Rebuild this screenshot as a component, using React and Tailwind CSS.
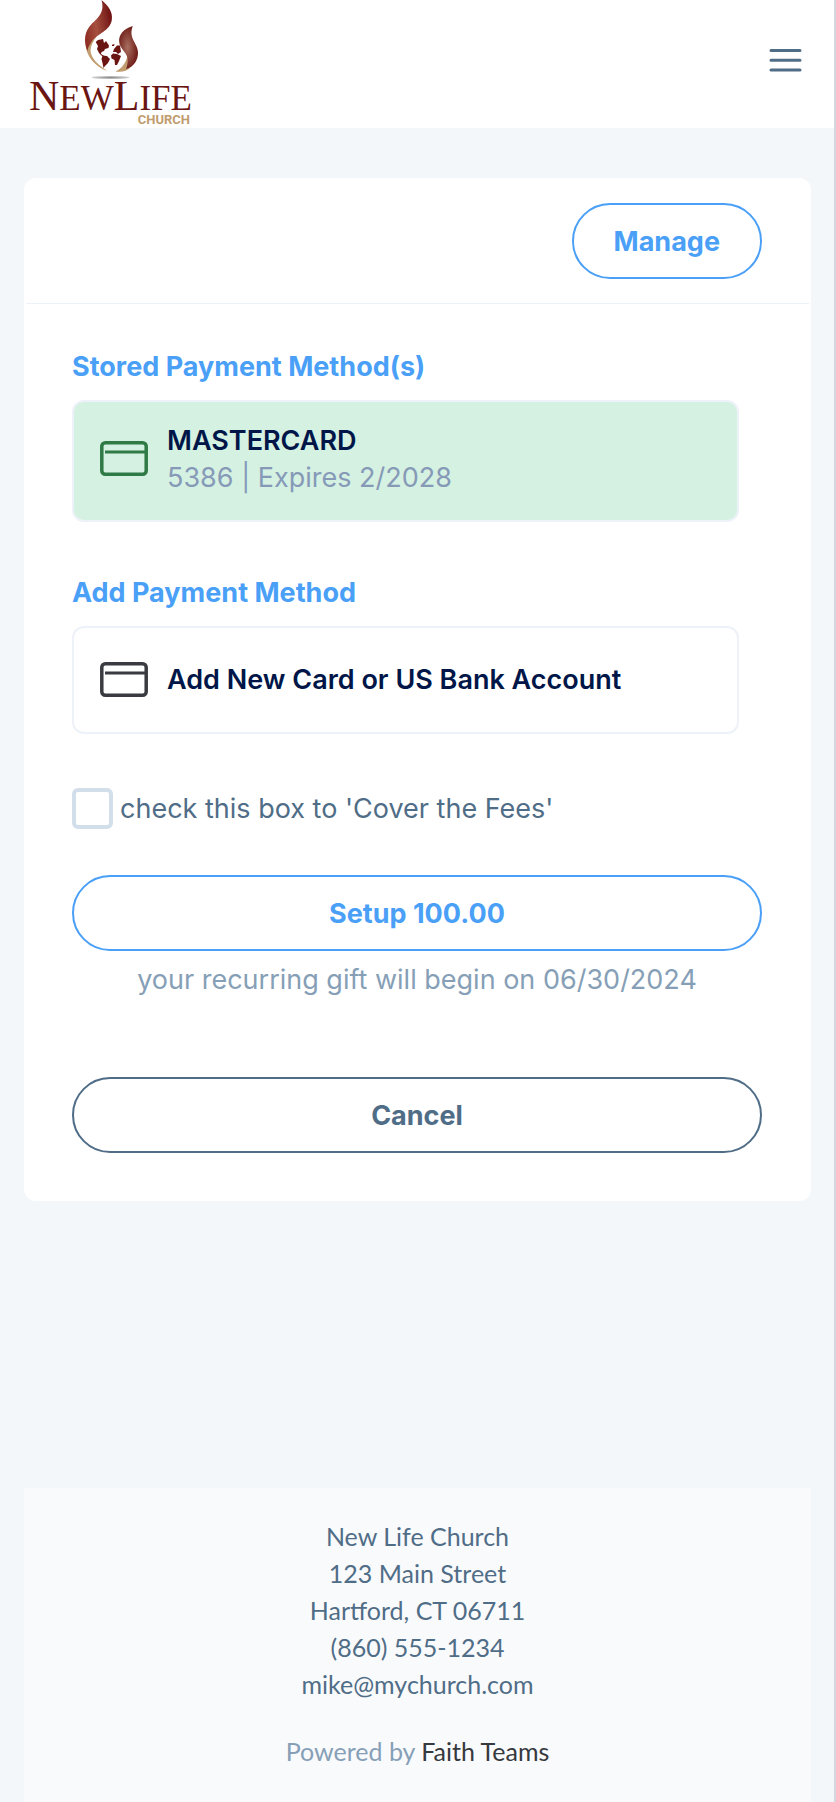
import React, { useState } from 'react';

const Logo = () => (
  <svg viewBox="24 0 172 128" className="h-32 w-[172px]" role="img" aria-label="New Life Church">
    <defs>
      <linearGradient id="flameLeft" x1="0" y1="0.6" x2="1" y2="0.3">
        <stop offset="0" stopColor="#8f2f25" />
        <stop offset="0.4" stopColor="#a5503f" />
        <stop offset="1" stopColor="#6d0f10" />
      </linearGradient>
      <radialGradient id="flameRight" cx="0.45" cy="0.5" r="0.5">
        <stop offset="0" stopColor="#a86f60" />
        <stop offset="1" stopColor="#71201b" />
      </radialGradient>
      <radialGradient id="shadow">
        <stop offset="0" stopColor="#8a8a8a" />
        <stop offset="1" stopColor="#d5d5d5" />
      </radialGradient>
    </defs>
    <path fill="#c09c6e" d="M97 36 C90 37 86 40 85.5 44 C86 56 95 67 107.5 71 C98 65 91 58 90.5 51 C90.5 46 93 41 97 36Z" />
    <path fill="url(#flameLeft)" d="M101.5 0 C108.5 6 113 12 111.8 20 C110 31 97 34 92 41 C89.5 45 88 47 87.5 51 C83 41 84.5 31 92 23.5 C98 18 105 12 101.5 0Z" />
    <path fill="#c09c6e" d="M128.5 52 C127 61 123 68 115.5 71.5 C122 72.5 127 71 130 68 C131 62 130 57 128.5 52Z" />
    <path fill="url(#flameRight)" d="M132.8 26 C123 29 118.5 35 119.2 42 C119.5 49 128.5 53 127.7 61 C127.5 64 127 67 126 69 C134 67 138.3 60 138 52 C137.5 43 128 38 132.8 26Z" />
    {/* continents */}
    <g fill="#6b1513">
      <path d="M95.7 42 L98 40 L103 39 L104 43 L106 41 L109 45.5 L108.5 48 L105 49 L104 51 L101.5 52 L101 54 L104 56 L102 56 L99 53 L97 49 L98 46Z" />
      <path d="M102.5 55.5 L107 56 L110 59 L108 63 L105 66 L103.5 68 L102.5 63 L101.5 59Z" />
      <path d="M113 53.5 L117 54 L121 56 L119 61 L117 65 L115 65 L114.5 60 L111.5 58.5 L111 55.5Z" />
      <path d="M113 52 L114 49 L117 45.5 L120 45.5 L121 52 L118 54 L116 52Z" />
      <path d="M112 44.8 L114.5 44 L114 46 L112 46Z" />
    </g>
    <ellipse cx="110.5" cy="77.5" rx="19" ry="1.6" fill="url(#shadow)" />
    <text x="29" y="110" fill="#6b1513" fontFamily="'Liberation Serif', serif" fontSize="35">
      <tspan fontSize="42">N</tspan>EW<tspan fontSize="42">L</tspan>IFE
    </text>
    <text x="190" y="124" textAnchor="end" fill="#c09c6e" fontFamily="Roboto, sans-serif" fontWeight="700" fontSize="13">
      CHURCH
    </text>
  </svg>
);

const CardIcon = ({ className }) => (
  <svg viewBox="0 0 48 36" className={`h-9 w-12 shrink-0 ${className}`} fill="none" stroke="currentColor" aria-hidden="true">
    <rect x="1.8" y="1.8" width="44.4" height="31.4" rx="3.5" strokeWidth="3.5" />
    <path d="M5 11 H46" strokeWidth="3" />
  </svg>
);

const App = () => {
  const [coverFees, setCoverFees] = useState(false);

  return (
    <div className="flex min-h-screen flex-col border-r-2 border-[#d3d7de] bg-[#f3f7fa] font-['Inter',sans-serif] text-[27px] leading-[37px] text-[#506d87]">
      <header className="flex h-32 items-center justify-between bg-white pr-8 pl-6">
        <Logo />
        <button type="button" aria-label="Open menu" className="mb-2">
          <svg viewBox="0 0 33 24" className="h-6 w-[33px]" stroke="currentColor" strokeWidth="3" strokeLinecap="round">
            <path d="M2 2.5 H31 M2 12.2 H31 M2 22 H31" />
          </svg>
        </button>
      </header>

      <main className="mr-[23px] ml-6 mt-[50px] mb-12 rounded-xl bg-white">
        <div className="mx-0.5 flex justify-end border-b border-[#edf2f8] pt-[25px] pr-[47px] pb-6">
          <button type="button" className="h-[76px] rounded-full border-2 border-[#4a9ff7] px-10 font-bold text-[#4a9ff7]">
            Manage
          </button>
        </div>

        <div className="pt-11 pr-[49px] pb-12 pl-12">
          <h2 className="font-bold text-[#4a9ff7]">Stored Payment Method(s)</h2>
          <div className="mt-[15px] mr-[23px]">
            <button type="button" className="flex w-full items-center gap-[19px] rounded-xl border-2 border-[#edf2f8] bg-[#d5f1e2] px-[26px] pt-5 pb-6 text-left">
              <CardIcon className="text-[#2f7a45]" />
              <span className="flex flex-col">
                <span className="font-semibold text-[#001648]">MASTERCARD</span>
                <span className="text-[#869ab8]">5386 | Expires 2/2028</span>
              </span>
            </button>
          </div>

          <h2 className="mt-[52px] font-bold text-[#4a9ff7]">Add Payment Method</h2>
          <div className="mt-[15px] mr-[23px]">
            <button type="button" className="flex w-full items-center gap-[19px] rounded-xl border-2 border-[#edf2f8] px-[26px] pt-[33px] pb-[34px] text-left">
              <CardIcon className="text-[#393b40]" />
              <span className="font-semibold text-[#001648]">Add New Card or US Bank Account</span>
            </button>
          </div>

          <div className="mt-[54px] flex items-center gap-[7px]">
            <input
              id="cover-fees"
              type="checkbox"
              checked={coverFees}
              onChange={(e) => setCoverFees(e.target.checked)}
              className="size-[41px] shrink-0 appearance-none rounded-md border-4 border-[#d2dfea] bg-white checked:bg-[#4a9ff7]"
            />
            <label htmlFor="cover-fees">check this box to 'Cover the Fees'</label>
          </div>

          <button type="button" className="mt-[46px] h-[76px] w-full rounded-full border-2 border-[#4a9ff7] font-bold text-[#4a9ff7]">
            Setup 100.00
          </button>
          <p className="mt-[10px] text-center text-[#869fb7]">your recurring gift will begin on 06/30/2024</p>

          <button type="button" className="mt-[79px] h-[76px] w-full rounded-full border-2 border-[#506d87] font-bold">
            Cancel
          </button>
        </div>
      </main>

      <footer className="mr-[23px] ml-6 mt-auto bg-[#f9fafc] px-12 pt-[30px] pb-8 text-center font-['Lato',sans-serif] text-[25px]">
        <address className="not-italic">
          <p>New Life Church</p>
          <p>123 Main Street</p>
          <p>Hartford, CT 06711</p>
          <p>(860) 555-1234</p>
          <p>mike@mychurch.com</p>
        </address>
        <p className="mt-[30px] text-[#869fb7]">
          Powered by <a href="#faith-teams" className="text-[#36393e]">Faith Teams</a>
        </p>
      </footer>
    </div>
  );
};

export default App;
